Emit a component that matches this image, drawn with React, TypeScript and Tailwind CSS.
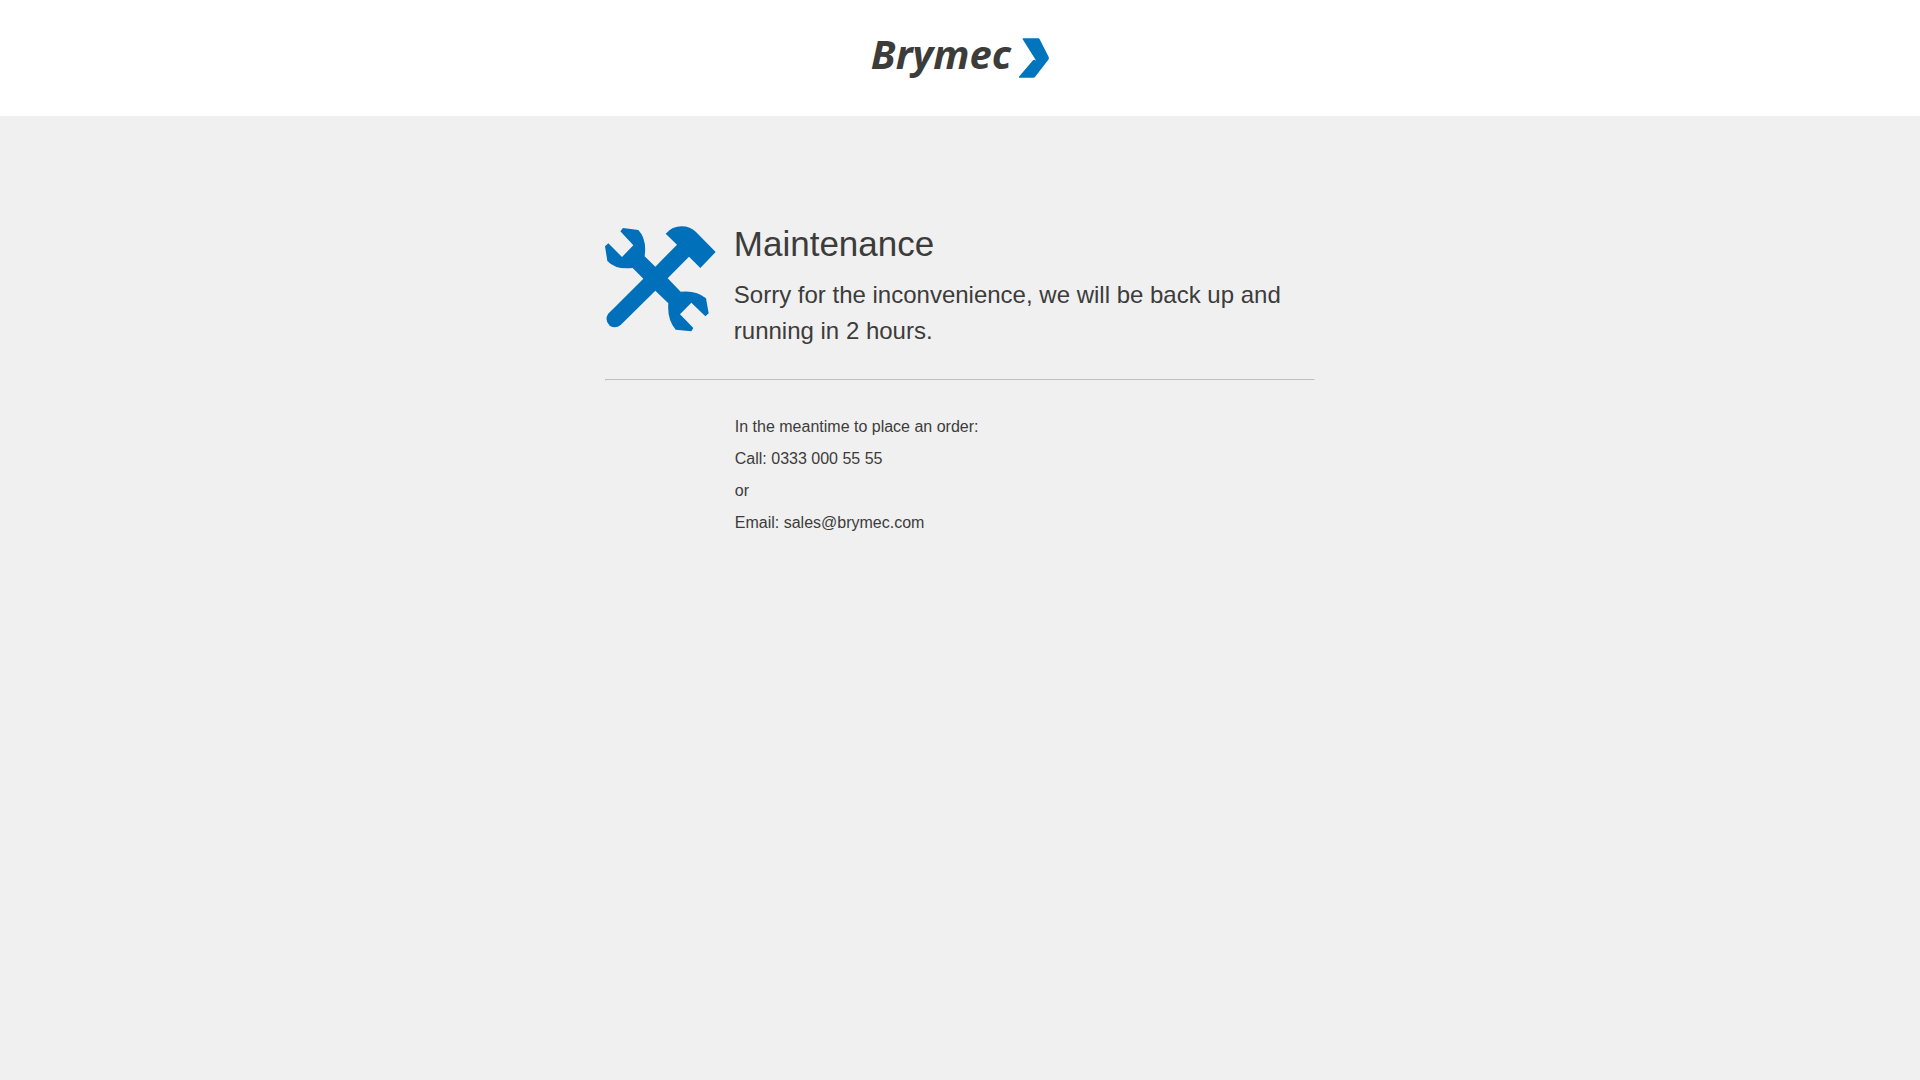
function Logo() {
  return (
    <div role="img" aria-label="Brymec" className="flex items-start gap-2">
      <span className="font-['Noto_Sans',sans-serif] text-[40px] leading-[48px] font-bold italic">Brymec</span>
      <svg viewBox="0 0 90 118" className="mt-2 h-[40px] w-[30px]" fill="#0075be" aria-hidden="true">
        <path d="M13 0H58Q60 0 62 3L89 56Q91 60 88 64L48 116Q46 118 44 118H2Q-2 118 1 114L42 66Q46 62 51 68Q49 62 46 58L11 3Q10 0 13 0Z" />
      </svg>
    </div>
  );
}

function ToolsIcon() {
  return (
    <svg viewBox="30 32 333 318" className="mt-[3px] h-[106px] w-[111px] shrink-0" fill="#0070bb" aria-hidden="true">
      <path d="M212 55Q232 33 260 33Q286 33 303 50L362 110L316 158L282 124L218 189L257 229Q305 224 333 249L341 294L331 303L289 262L255 297L295 338L289 348L242 343Q216 313 220 264L181 226L77 329Q61 342 44 331Q28 315 39 296L145 190L113 158Q62 164 37 137L30 93L40 84L81 125L115 90L76 48L84 38L130 44Q156 71 149 123L181 154L246 88Z" />
    </svg>
  );
}

export default function App() {
  return (
    <div className="flex min-h-screen flex-col bg-[#f0f0f0] font-['Liberation_Sans',Arial,sans-serif] text-[#3c3c3b]">
      <header className="flex h-[116px] justify-center bg-white pt-[30px]">
        <Logo />
      </header>
      <main className="mx-auto w-[37%] pt-[107px]">
        <section className="flex gap-[18px]">
          <ToolsIcon />
          <div>
            <h1 className="text-[35px] leading-[42px]">Maintenance</h1>
            <p className="mt-3 text-2xl leading-[36px]">
              Sorry for the inconvenience, we will be back up and running in 2 hours.
            </p>
          </div>
        </section>
        <hr className="my-[30px] h-[2px] border border-t-[#c0c0c0] border-r-[#eeeeee] border-b-[#eeeeee] border-l-[#c0c0c0]" />
        <section className="pl-[130px] text-base leading-8">
          <p>In the meantime to place an order:</p>
          <p>Call: 0333 000 55 55</p>
          <p>or</p>
          <p>Email: sales@brymec.com</p>
        </section>
      </main>
    </div>
  );
}
